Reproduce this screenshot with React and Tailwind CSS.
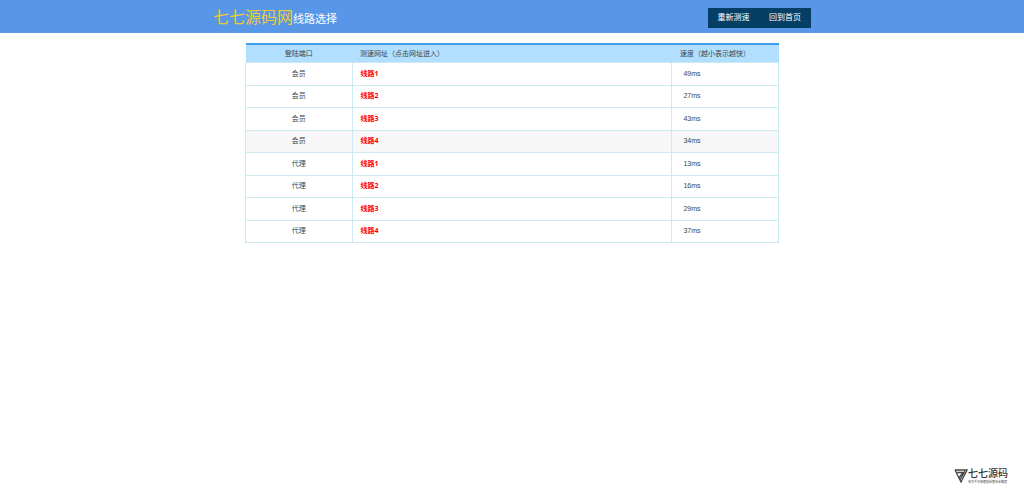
const rows = [
  ['会员', '线路1', '49ms'],
  ['会员', '线路2', '27ms'],
  ['会员', '线路3', '43ms'],
  ['会员', '线路4', '34ms'],
  ['代理', '线路1', '13ms'],
  ['代理', '线路2', '16ms'],
  ['代理', '线路3', '29ms'],
  ['代理', '线路4', '37ms'],
];

function Logo() {
  return (
    <svg viewBox="0 0 28 28" className="h-[14px] w-[14px]" fill="none" stroke="#444" strokeWidth="2.6" aria-hidden="true">
      <path d="M2 2H26L14 26L2 2" />
      <path d="M6 7H18L10 18M22 4L12 22" />
    </svg>
  );
}

export default function App() {
  return (
    <div className="flex min-h-screen flex-col bg-white font-['Liberation_Sans','Noto_Sans_CJK_SC',sans-serif] text-[7px] text-[#444]">
      <header className="bg-[#5896e8]">
        <div className="mx-auto flex h-[33px] w-full max-w-[598px] items-center justify-between">
          <h1 className="flex items-center pt-[2px] leading-none">
            <span className="text-[16px] leading-[20px] text-[#f0c93d]">七七源码网</span>
            <span className="pt-[3px] text-[11px] leading-[14px] text-white">线路选择</span>
          </h1>
          <nav className="mt-[2px] flex h-5 bg-[#053f66] text-[8px] text-white">
            <button type="button" className="w-[51px]">重新测速</button>
            <a href="#home" className="flex w-[52px] items-center justify-center">回到首页</a>
          </nav>
        </div>
      </header>

      <main className="mx-auto mt-[10px] w-full max-w-[534px]">
        <table className="w-full table-fixed border-collapse leading-[10px]">
          <colgroup>
            <col className="w-1/5" />
            <col className="w-3/5" />
            <col className="w-1/5" />
          </colgroup>
          <thead>
            <tr className="h-[18px] border-t-2 border-[#3d9de8] bg-[#b0dfff] text-left">
              <th className="px-0 pt-[2px] pb-0 text-center font-normal">登陆端口</th>
              <th className="pt-[2px] pr-0 pb-0 pl-2 font-normal">测速网址（点击网址进入）</th>
              <th className="pt-[2px] pr-0 pb-0 pl-2 font-normal">速度（越小表示越快）</th>
            </tr>
          </thead>
          <tbody>
            {rows.map(([port, line, speed], i) => (
              <tr key={i} className={i === 3 ? 'bg-[#f7f7f7] odd:h-[23px] even:h-[22px]' : 'odd:h-[23px] even:h-[22px]'}>
                <td className="border border-[#cdeaf3] p-0 text-center">{port}</td>
                <td className="border border-[#cdeaf3] py-0 pr-0 pl-2">
                  <a href={`#line-${i + 1}`} className="font-['Noto_Sans','Noto_Sans_CJK_SC',sans-serif] font-bold text-[#ff0000]">{line}</a>
                </td>
                <td className="border border-[#cdeaf3] py-0 pr-0 pl-[11px]">{speed}</td>
              </tr>
            ))}
          </tbody>
        </table>
      </main>

      <footer className="mt-auto flex items-center justify-end pr-4 pb-4 text-[#333]">
        <Logo />
        <div className="flex flex-col gap-[2px] font-['Noto_Sans_CJK_SC',sans-serif]">
          <span className="text-[10px] leading-[11px] font-medium">七七源码</span>
          <span className="text-[3px] leading-[4px]">专为千万草根创业者专业搭建</span>
        </div>
      </footer>
    </div>
  );
}
